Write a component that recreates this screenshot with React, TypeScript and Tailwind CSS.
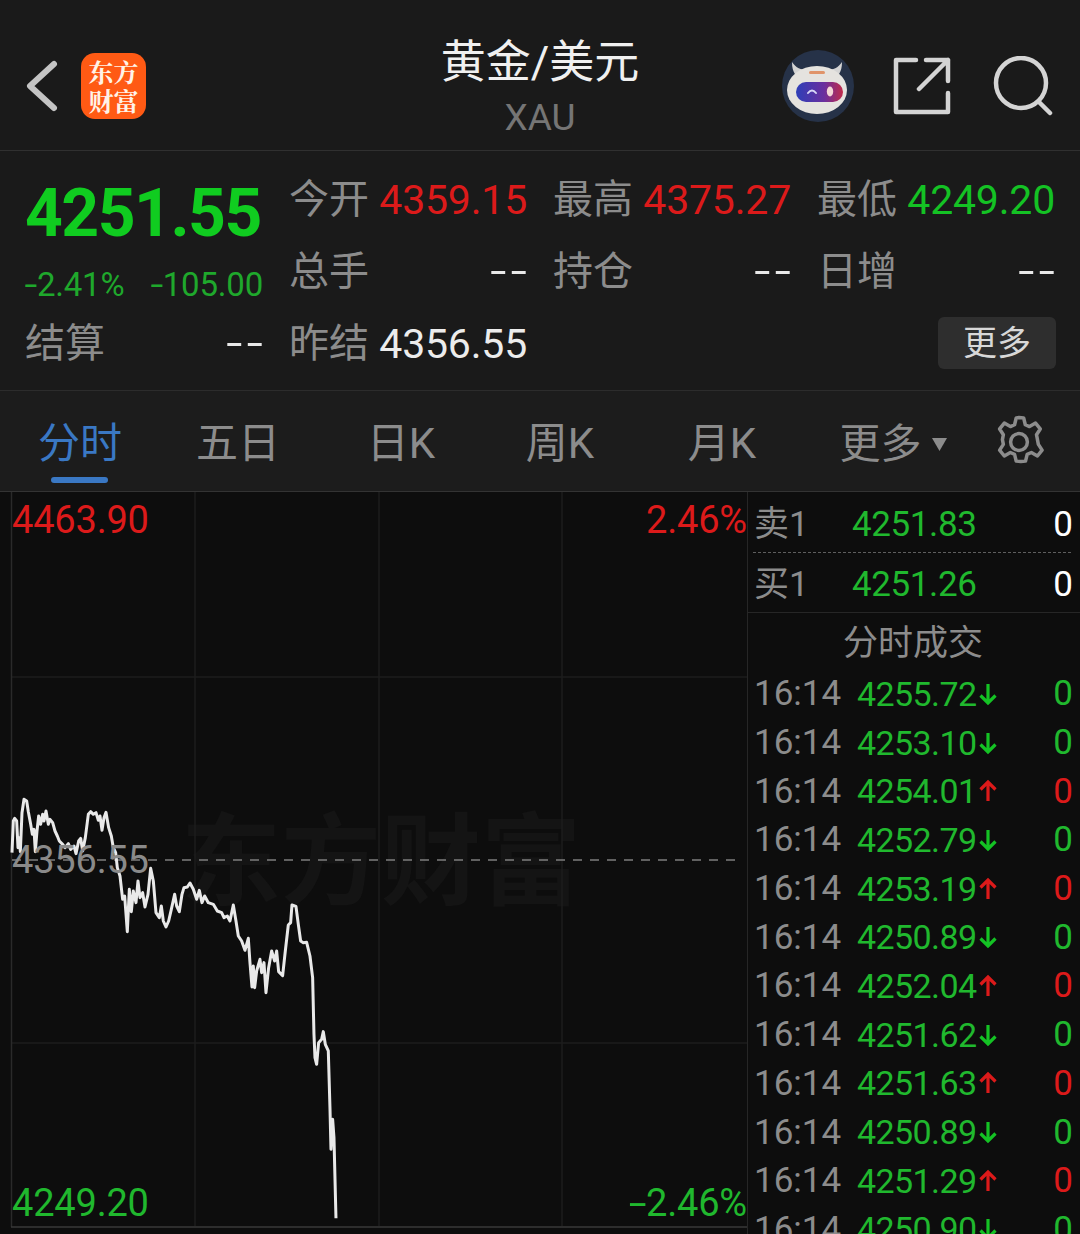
import React from "react";

const FONT = "font-['Roboto','Noto_Sans_CJK_SC',sans-serif]";
const GREEN = "text-[#14c224]";
const RED = "text-[#dc1a1a]";
const LABEL = "text-[#8c8c8c]";

const pts =
  "36,215 40,120 44,112 50,120 54,200 58,170 61,212 66,95 72,55 80,60 85,92 92,130 97,160 102,145 106,212 111,150 116,105 122,130 128,100 132,120 138,90 145,130 150,115 158,125 165,150 172,165 178,180 188,190 195,200 205,188 212,205 222,195 228,218 236,180 242,172 248,210 256,170 265,100 272,92 280,100 288,95 295,118 300,105 306,148 312,110 318,94 326,140 334,165 340,200 347,215 352,260 360,285 368,355 374,345 382,452 388,325 394,392 400,330 408,365 414,300 420,350 428,335 435,378 444,340 452,262 460,300 468,395 478,410 484,375 490,420 498,438 506,420 514,385 524,340 530,375 538,392 546,340 552,320 562,318 570,306 580,325 590,355 598,328 606,365 614,345 625,365 640,370 652,390 665,395 672,410 682,405 690,420 700,372 708,420 715,465 725,480 735,508 745,472 750,545 756,618 760,555 764,620 770,570 780,535 785,575 792,545 798,635 806,560 815,510 824,540 830,510 836,572 848,584 856,510 865,432 872,425 876,372 888,376 895,430 902,480 910,485 920,484 930,525 938,590 942,760 945,830 950,850 956,785 965,775 970,752 976,790 985,810 990,980 993,1105 998,1015 1002,1070 1008,1312";

const trades: [string, "d" | "u"][] = [
  ["4255.72", "d"],
  ["4253.10", "d"],
  ["4254.01", "u"],
  ["4252.79", "d"],
  ["4253.19", "u"],
  ["4250.89", "d"],
  ["4252.04", "u"],
  ["4251.62", "d"],
  ["4251.63", "u"],
  ["4250.89", "d"],
  ["4251.29", "u"],
  ["4250.90", "d"],
];

function Arrow({ dir }: { dir: "d" | "u" }) {
  const color = dir === "d" ? "#14c224" : "#dc1a1a";
  return (
    <svg width="18" height="24" viewBox="0 0 18 24" className="ml-[3px] shrink-0" fill="none" stroke={color} strokeWidth="3.2">
      {dir === "d" ? <path d="M9 2V21M1.5 13.5L9 21L16.5 13.5" /> : <path d="M9 22V3M1.5 10.5L9 3L16.5 10.5" />}
    </svg>
  );
}

function Stat({ label, value, color }: { label: string; value: string; color: string }) {
  return (
    <div className="flex items-center justify-between">
      <span className={`text-[40px] leading-none ${LABEL}`}>{label}</span>
      {value === "--" ? (
        <span className={`-mr-[4px] origin-right scale-x-[1.45] text-[40px] leading-none tracking-[3px] ${color}`}>--</span>
      ) : (
        <span className={`text-[41px] leading-none tracking-[-0.2px] ${color}`}>{value}</span>
      )}
    </div>
  );
}

function Tab({ w, active, children }: { w: string; active?: boolean; children: React.ReactNode }) {
  return (
    <div className={`relative flex h-full items-center justify-center pt-[6px] text-[42px] leading-none ${w} ${active ? "text-[#3a78c4]" : LABEL}`}>
      {children}
      {active && <div className="absolute bottom-[8px] left-[51px] h-[6px] w-[57px] rounded-full bg-[#3a78c4]" />}
    </div>
  );
}

function Minus({ className }: { className: string }) {
  return <span className={`inline-block origin-right ${className}`}>-</span>;
}

export default function App() {
  return (
    <div className={`${FONT} flex h-[1234px] w-[1080px] flex-col overflow-hidden bg-[#1a1a1a]`}>
      {/* Header */}
      <header className="grid h-[151px] shrink-0 grid-cols-[1fr_auto_1fr] items-center border-b border-[#303030] pt-[21px]">
        <div className="flex items-center pl-[24px]">
          <svg width="36" height="54" viewBox="0 0 36 54" fill="none" stroke="#c4c4c4" strokeWidth="6" strokeLinecap="round" strokeLinejoin="round">
            <path d="M30 5L6 27L30 49" />
          </svg>
          <div className="ml-[21px] flex h-[66px] w-[65px] items-center justify-center rounded-[14px] bg-[#ff5a14]">
            <div className="w-[50px] text-center text-[25px] font-bold leading-[29px] text-[#fff3e8] font-['Noto_Serif_CJK_SC','Noto_Sans_CJK_SC',serif]">东方财富</div>
          </div>
        </div>
        <div className="flex flex-col items-center pt-[4px]">
          <div className="text-[45px] leading-[52px] text-[#f0f0f0]">黄金/美元</div>
          <div className="mt-[9px] text-[37px] leading-[40px] text-[#757575]">XAU</div>
        </div>
        <div className="flex items-center justify-end pr-[27px]">
          <svg width="74" height="74" viewBox="0 0 74 74" className="mr-[38px]">
            <circle cx="37" cy="37" r="36" fill="#263248" />
            <path d="M11 13C11 24 15 27 20 29L26 21C20 21 15 19 11 13ZM61 13C61 24 57 27 52 29L46 21C52 21 57 19 61 13Z" fill="#d4d4d4" />
            <ellipse cx="36" cy="41" rx="30" ry="24" fill="#e5e3df" />
            <rect x="28" y="22" width="16" height="3" rx="1.5" fill="#e0946a" />
            <defs>
              <linearGradient id="visor" x1="0" x2="1" y1="0" y2="0">
                <stop offset="0" stopColor="#2e3fb8" />
                <stop offset="0.6" stopColor="#6a2f9e" />
                <stop offset="1" stopColor="#c02a4a" />
              </linearGradient>
            </defs>
            <rect x="15" y="33" width="47" height="20" rx="10" fill="url(#visor)" />
            <path d="M27 44Q31 39 35 44" fill="none" stroke="#d8d8f5" strokeWidth="2" strokeLinecap="round" />
            <ellipse cx="49" cy="42.5" rx="3.2" ry="5" fill="#f3d6d6" />
          </svg>
          <svg width="58" height="58" viewBox="0 0 58 58" fill="none" stroke="#d4d4d4" strokeWidth="4.5" strokeLinecap="round" className="mr-[42px]">
            <path d="M23 3H3V55H55V36" strokeLinejoin="round" />
            <path d="M26 32L55 3M33 3H55V24" strokeLinejoin="round" />
          </svg>
          <svg width="60" height="60" viewBox="0 0 60 60" fill="none" stroke="#d4d4d4" strokeWidth="4.5" strokeLinecap="round">
            <circle cx="28" cy="27" r="25" />
            <path d="M46 46L57 57" />
          </svg>
        </div>
      </header>

      {/* Stats */}
      <section className="grid h-[240px] shrink-0 grid-cols-[repeat(4,238px)] grid-rows-[repeat(3,72px)] gap-x-[26px] border-b border-[#2c2c2c] pl-[25px] pt-[13px]">
        <div className="row-span-2 flex flex-col">
          <div className="mt-[15px] text-[66px] font-bold leading-[70px] tracking-[-1.5px] text-[#10cc20]">4251.55</div>
          <div className="mt-[16px] flex justify-between text-[33px] leading-[40px] tracking-[-0.2px] text-[#1fa82c]">
            <span>
              <Minus className="ml-[3px] scale-x-[1.4]" />2.41%
            </span>
            <span>
              <Minus className="ml-[3px] scale-x-[1.4]" />105.00
            </span>
          </div>
        </div>
        <Stat label="今开" value="4359.15" color={RED} />
        <Stat label="最高" value="4375.27" color={RED} />
        <Stat label="最低" value="4249.20" color={GREEN} />
        <Stat label="总手" value="--" color="text-[#e8e8e8]" />
        <Stat label="持仓" value="--" color="text-[#e8e8e8]" />
        <Stat label="日增" value="--" color="text-[#e8e8e8]" />
        <Stat label="结算" value="--" color="text-[#e8e8e8]" />
        <Stat label="昨结" value="4356.55" color="text-[#ececec]" />
        <div />
        <div className="-mr-[1px] flex items-center justify-end pb-[2px]">
          <div className="flex h-[52px] w-[118px] items-center justify-center rounded-[6px] bg-[#2e2e2e] text-[34px] leading-none text-[#d8d8d8]">更多</div>
        </div>
      </section>

      {/* Tabs */}
      <nav className="flex h-[101px] shrink-0 items-stretch border-b border-[#333333] bg-[#1c1c1c]">
        <Tab w="w-[160px]" active>分时</Tab>
        <Tab w="w-[156px]">五日</Tab>
        <Tab w="w-[170px]">日K</Tab>
        <Tab w="w-[148px]">周K</Tab>
        <Tab w="w-[176px]">月K</Tab>
        <Tab w="w-[166px]">
          <span className="text-[41px]">更多</span>
          <svg width="15" height="13" viewBox="0 0 15 13" className="ml-[10px]"><path d="M0 0H15L7.5 13Z" fill="#8c8c8c" /></svg>
        </Tab>
        <div className="flex flex-1 items-center pl-[15px] pt-[2px]">
          <svg width="56" height="56" viewBox="0 0 24 24" fill="none" stroke="#8c8c8c" strokeWidth="1.5" strokeLinejoin="round">
            <path d="M12 1.5l2 .2.7 2.9 1.8.8 2.6-1.5 2 2.5-1.6 2.5.4 2-.0 .1.4 2 1.6 2.5-2 2.5-2.6-1.5-1.8.8-.7 2.9-2 .2-2-.2-.7-2.9-1.8-.8-2.6 1.5-2-2.5 1.6-2.5-.4-2 .4-2.1-1.6-2.5 2-2.5 2.6 1.5 1.8-.8.7-2.9z" />
            <circle cx="12" cy="12" r="3.6" />
          </svg>
        </div>
      </nav>

      {/* Body */}
      <main className="flex min-h-0 flex-1 bg-[#0d0d0d]">
        <div className="relative w-[747px] shrink-0">
          <div className="absolute left-[181px] top-[316px] text-[100px] font-bold leading-[110px] text-[#141414]">东方财富</div>
          <svg width="747" height="742" viewBox="0 0 747 742" className="absolute inset-0">
            <g stroke="#1c1c1c" strokeWidth="1.5">
              <path d="M195 0V734M379 0V734M562 0V734" />
              <path d="M12 185H747M12 551H747" />
            </g>
            <path d="M11.5 0V735" stroke="#2a2a2a" strokeWidth="1.5" />
            <path d="M11 735H747" stroke="#383838" strokeWidth="1.5" />
            <path d="M12 368H742" stroke="#7e7e7e" strokeWidth="1.5" strokeDasharray="9 8" />
            <g transform="translate(0 289) scale(0.3333)">
              <polyline points={pts} fill="none" stroke="#e9e9e9" strokeWidth="9" strokeLinejoin="round" />
            </g>
          </svg>
          <div className={`absolute left-[12px] top-[8px] text-[38px] leading-[40px] tracking-[-0.2px] ${RED}`}>4463.90</div>
          <div className={`absolute right-0 top-[8px] text-[38px] leading-[40px] tracking-[-0.2px] ${RED}`}>2.46%</div>
          <div className="absolute left-[12px] top-[348px] text-[38px] leading-[40px] tracking-[-0.2px] text-[#8a8a8a]">4356.55</div>
          <div className="absolute left-[12px] top-[691px] text-[38px] leading-[40px] tracking-[-0.2px] text-[#20b82e]">4249.20</div>
          <div className="absolute right-0 top-[691px] text-[38px] leading-[40px] tracking-[-0.2px] text-[#20b82e]">
            <Minus className="scale-x-[1.7]" />2.46%
          </div>
        </div>

        <aside className="flex min-w-0 flex-1 flex-col overflow-hidden border-l border-[#262626]">
          <div className="flex h-[60px] shrink-0 items-center pl-[6px] pr-[7px] pt-[5px] text-[35px] leading-none">
            <span className={`w-[98px] ${LABEL}`}>卖1</span>
            <span className="flex-1 tracking-[-0.4px] text-[#20b82e]">4251.83</span>
            <span className="text-white">0</span>
          </div>
          <div className="mx-[5px] w-[318px] shrink-0 border-t-[1.5px] border-dashed border-[#5e5e5e]" />
          <div className="flex h-[60px] shrink-0 items-center border-b border-[#262626] pl-[6px] pr-[7px] pt-[4px] text-[35px] leading-none">
            <span className={`w-[98px] ${LABEL}`}>买1</span>
            <span className="flex-1 tracking-[-0.4px] text-[#20b82e]">4251.26</span>
            <span className="text-white">0</span>
          </div>
          <div className={`flex h-[56.5px] shrink-0 items-center justify-center pr-[2px] pt-[4px] text-[35px] leading-none ${LABEL}`}>分时成交</div>
          <div className="flex flex-col">
            {trades.map(([price, dir], i) => (
              <div key={i} className="flex h-[48.7px] shrink-0 items-center pl-[6px] pr-[7px] text-[35px] leading-none">
                <span className="w-[103px] text-[#8c8c8c]">16:14</span>
                <span className="text-[34px] tracking-[-0.6px] text-[#20b82e]">{price}</span>
                <Arrow dir={dir} />
                <span className={`ml-auto ${dir === "d" ? "text-[#20b82e]" : RED}`}>0</span>
              </div>
            ))}
          </div>
        </aside>
      </main>
    </div>
  );
}
